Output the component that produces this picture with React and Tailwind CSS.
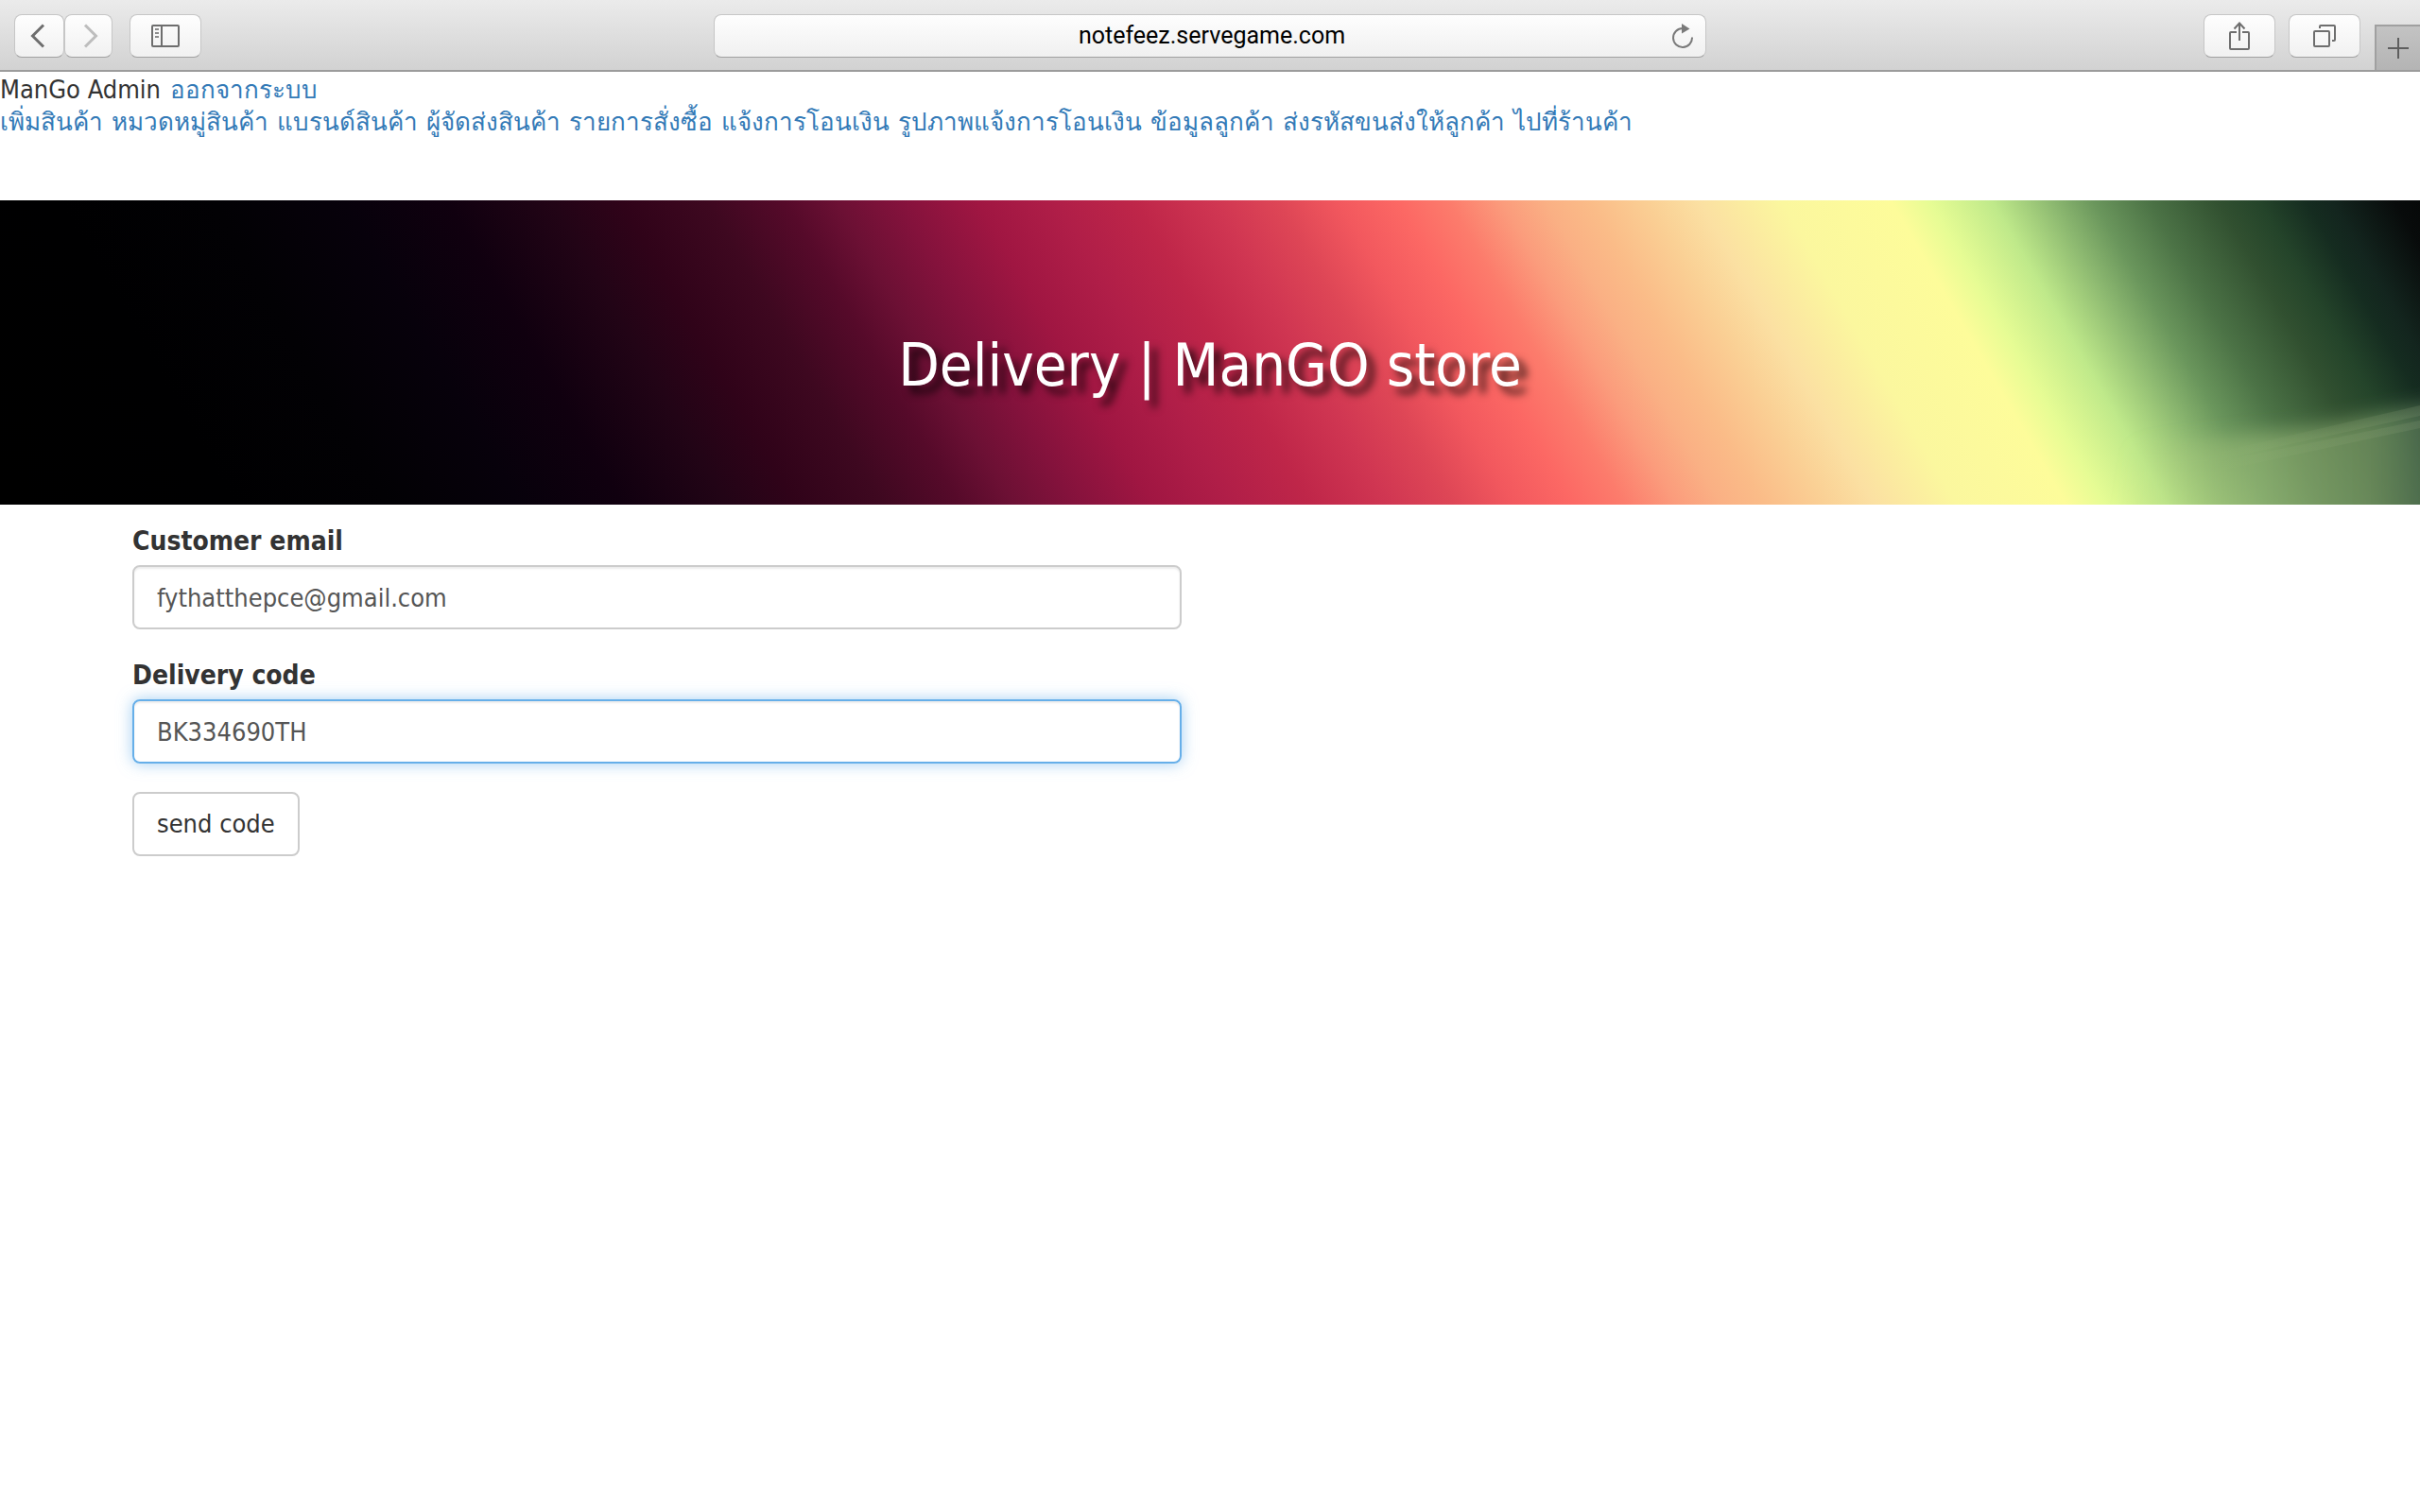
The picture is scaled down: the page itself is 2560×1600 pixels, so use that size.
const menuLinks = [
  'เพิ่มสินค้า',
  'หมวดหมู่สินค้า',
  'แบรนด์สินค้า',
  'ผู้จัดส่งสินค้า',
  'รายการสั่งซื้อ',
  'แจ้งการโอนเงิน',
  'รูปภาพแจ้งการโอนเงิน',
  'ข้อมูลลูกค้า',
  'ส่งรหัสขนส่งให้ลูกค้า',
  'ไปที่ร้านค้า',
]

function ToolButton({ label, className, children }) {
  return (
    <button
      type="button"
      aria-label={label}
      className={`flex h-[46px] items-center justify-center rounded-lg border border-[#c6c6c6] border-b-[#a0a0a0] bg-linear-to-b from-[#fefefe] to-[#f1f1f1] text-[#6e6e6e] ${className}`}
    >
      {children}
    </button>
  )
}

function Toolbar() {
  return (
    <header className="grid h-[76px] grid-cols-[1fr_41%_1fr] border-b-2 border-[#9c9c9c] bg-linear-to-b from-[#ebebeb] to-[#d2d2d2]">
      <div className="flex pt-[15px] pl-[15px]">
        <ToolButton label="Back" className="w-[53px] pr-1">
          <svg width="16" height="26" viewBox="0 0 16 26" fill="none" stroke="currentColor" strokeWidth="3">
            <path d="M14 1.5 2.5 13 14 24.5" />
          </svg>
        </ToolButton>
        <ToolButton label="Forward" className="w-[51px] pl-1">
          <svg width="16" height="26" viewBox="0 0 16 26" fill="none" stroke="#bdbdbd" strokeWidth="3">
            <path d="M2 1.5 13.5 13 2 24.5" />
          </svg>
        </ToolButton>
        <ToolButton label="Show sidebar" className="ml-[18px] w-[76px]">
          <svg width="30" height="24" viewBox="0 0 30 24" fill="none" stroke="currentColor" strokeWidth="2">
            <rect x="1" y="1" width="28" height="22" rx="1" />
            <path d="M11 1v22" />
            <path d="M4 5h4M4 9h4M4 13h4" stroke="#8c8c8c" />
          </svg>
        </ToolButton>
      </div>

      <div className="pt-[15px]">
        <div className="flex h-[46px] items-center rounded-lg border border-[#c6c6c6] border-b-[#a0a0a0] bg-linear-to-b from-[#fefefe] to-[#f0f0f0] pr-3 pl-10">
          <input
            aria-label="Address"
            defaultValue="notefeez.servegame.com"
            className="h-8 min-w-0 flex-1 bg-transparent text-center font-['Roboto',sans-serif] text-[25px] leading-8 text-black outline-none"
          />
          <button type="button" aria-label="Reload" className="text-[#7a7a7a]">
            <svg width="24" height="28" viewBox="0 0 24 28" fill="none">
              <path d="M22 15.5A10 10 0 1 1 12 6" stroke="currentColor" strokeWidth="2" />
              <path d="M11 1v10.500L19.500 6.500z" fill="currentColor" />
            </svg>
          </button>
        </div>
      </div>

      <div className="flex justify-end pt-[15px]">
        <ToolButton label="Share" className="w-[76px]">
          <svg width="24" height="32" viewBox="0 0 24 32" fill="none" stroke="currentColor" strokeWidth="2">
            <path d="M9 12H3a1 1 0 0 0-1 1v16a1 1 0 0 0 1 1h18a1 1 0 0 0 1-1V13a1 1 0 0 0-1-1h-6" />
            <path d="M12 21V2M6.500 8.500 12 2.500l5.500 6" />
          </svg>
        </ToolButton>
        <ToolButton label="Show tabs" className="ml-[14px] w-[76px]">
          <svg width="26" height="26" viewBox="0 0 26 26" fill="none" stroke="currentColor" strokeWidth="2">
            <rect x="2" y="8" width="16" height="16" rx="1" />
            <path d="M8 5V3a1 1 0 0 1 1-1h14a1 1 0 0 1 1 1v14a1 1 0 0 1-1 1h-2" />
          </svg>
        </ToolButton>
        <button
          type="button"
          aria-label="New tab"
          className="mt-[11px] ml-[15px] flex h-12 w-12 items-center justify-center border-t-2 border-l-2 border-[#a0a0a0] bg-linear-to-b from-[#c3c3c3] to-[#b4b4b4] text-[#5e5e5e]"
        >
          <svg width="22" height="22" viewBox="0 0 22 22" stroke="currentColor" strokeWidth="2">
            <path d="M11 0v22M0 11h22" />
          </svg>
        </button>
      </div>
    </header>
  )
}

function Banner() {
  return (
    <div className="relative flex h-[322px] items-center justify-center bg-[linear-gradient(60deg,#000000_0%,#000001_9%,#020104_15%,#07010b_20%,#10000f_24%,#220416_28%,#300319_30.7%,#3e0820_34%,#560a2a_37%,#6c1034_39%,#84123c_41.4%,#a01642_44.4%,#b01e48_47.4%,#bf2649_50.5%,#d03652_53.5%,#de4656_56%,#f2585e_58.3%,#fc6864_60.6%,#fc7c6c_62.6%,#fb9c7c_64.6%,#fab084_66.3%,#fabc88_68%,#facf94_70.2%,#fbe0a2_72.2%,#fbf79e_75.4%,#fdfc9a_79.6%,#e6fc94_81.1%,#bfe98a_83.5%,#8cb870_85.8%,#6a965c_87.4%,#4c7346_89.5%,#315030_92.2%,#24442a_93.8%,#152c20_95.6%,#13251e_96.6%,#080b0b_99%,#060808_100%)]">
      <svg aria-hidden="true" className="absolute inset-y-0 right-0 h-full" viewBox="0 0 660 322">
        <defs>
          <linearGradient id="haze" x1="0" x2="1" y1="0" y2="0">
            <stop offset="0" stopColor="#b8d080" stopOpacity="0" />
            <stop offset="0.4" stopColor="#a0c07c" stopOpacity="0.55" />
            <stop offset="0.75" stopColor="#7c9c68" stopOpacity="0.7" />
            <stop offset="1" stopColor="#50705a" stopOpacity="0.6" />
          </linearGradient>
          <linearGradient id="beam" x1="0" x2="1" y1="0" y2="0">
            <stop offset="0" stopColor="#b4cc8c" stopOpacity="0" />
            <stop offset="1" stopColor="#8ca07c" stopOpacity="0.2" />
          </linearGradient>
          <filter id="soften" x="-20%" y="-20%" width="140%" height="140%">
            <feGaussianBlur stdDeviation="10" />
          </filter>
        </defs>
        <path d="M360 262 560 238 700 208V360H340z" fill="url(#haze)" filter="url(#soften)" />
        <path d="M440 268 660 217V228L440 276z" fill="url(#beam)" />
        <path d="M440 278 660 233V241L440 288z" fill="url(#beam)" />
      </svg>
      <h1 className="relative mt-7 text-center text-[63px] leading-[72px] text-white [text-shadow:8px_8px_8px_rgba(0,0,0,0.75)]">
        Delivery | ManGO store
      </h1>
    </div>
  )
}

export default function App() {
  return (
    <div className="min-h-screen bg-white font-['DejaVu_Sans_Condensed','Noto_Sans',sans-serif] text-[27px] leading-[34px] text-[#333333]">
      <Toolbar />

      <nav className="pt-0.5 pb-[66px]">
        <div className="flex h-[34px] gap-x-2.5">
          <span>ManGo Admin</span>
          <a href="#logout" className="text-[26px] text-[#337ab7]">
            ออกจากระบบ
          </a>
        </div>
        <div className="flex flex-wrap gap-x-[9px] text-[26px]">
          {menuLinks.map((text) => (
            <a key={text} href="#menu" className="text-[#337ab7]">
              {text}
            </a>
          ))}
        </div>
      </nav>

      <Banner />

      <main className="mx-auto max-w-[2340px]">
        <form className="flex w-1/2 flex-col items-start px-[30px] pt-[22px]" onSubmit={(e) => e.preventDefault()}>
          <label htmlFor="email" className="mb-2 text-[28px] font-bold">
            Customer email
          </label>
          <input
            id="email"
            type="email"
            defaultValue="fythatthepce@gmail.com"
            className="mb-8 h-[68px] w-full rounded-lg border-2 border-[#cccccc] px-6 text-[#555555] shadow-[inset_0_2px_2px_rgba(0,0,0,0.075)] outline-none"
          />
          <label htmlFor="code" className="mb-2 text-[28px] font-bold">
            Delivery code
          </label>
          <input
            id="code"
            type="text"
            defaultValue="BK334690TH"
            className="mb-[30px] h-[68px] w-full rounded-lg border-2 border-[#66afe9] px-6 text-[#555555] shadow-[inset_0_2px_2px_rgba(0,0,0,0.075),0_0_16px_rgba(102,175,233,0.6)] outline-none"
          />
          <button type="submit" className="h-[68px] rounded-lg border-2 border-[#cccccc] bg-white px-6">
            send code
          </button>
        </form>
      </main>
    </div>
  )
}
